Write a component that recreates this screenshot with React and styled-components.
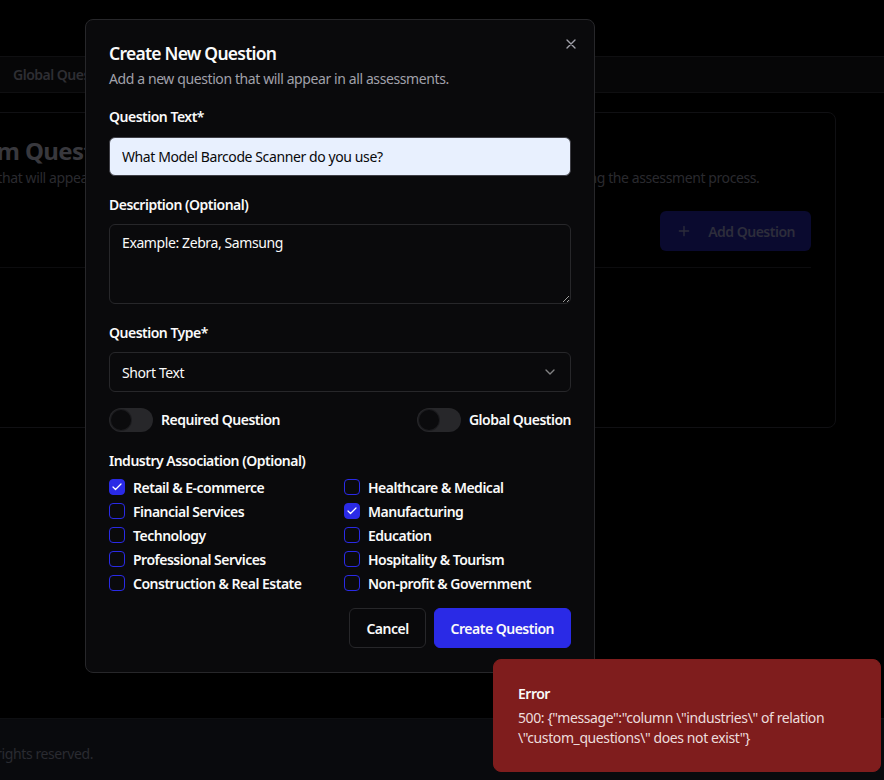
import React from "react";
import styled, { createGlobalStyle } from "styled-components";

const FONT = `"Noto Sans", "Open Sans", sans-serif`;

const GlobalStyle = createGlobalStyle`
  html, body { margin: 0; padding: 0; background: #000; }
  body { font-family: ${FONT}; overflow: hidden; letter-spacing: -0.4px; }
  * { box-sizing: border-box; }
`;

/* ---------- background page (dimmed by the dialog overlay) ---------- */
const Page = styled.div`
  width: 884px;
  height: 780px;
  display: flex;
  flex-direction: column;
  overflow: hidden;
  background: #000;
`;
const TopBar = styled.div`
  height: 57px;
  border-bottom: 1px solid #0f0f11;
`;
const TabStrip = styled.div`
  height: 36px;
  display: flex;
  align-items: center;
  padding-left: 13px;
  background: #060607;
  border-bottom: 1px solid #0f0f11;
`;
const TabLabel = styled.span`
  font-size: 14px;
  font-weight: 600;
  letter-spacing: -0.5px;
  color: #2e2e33;
`;
const Main = styled.main`
  flex: 1;
  padding: 19px 48px 0 0;
`;
const Card = styled.section`
  margin-left: -94px;
  height: 316px;
  border: 1px solid #101013;
  border-radius: 8px;
  padding: 23px 24px 0 24px;
  display: flex;
  flex-direction: column;
`;
const CardTitle = styled.h2`
  margin: 0;
  font-size: 24px;
  line-height: 30px;
  font-weight: 700;
  letter-spacing: -0.6px;
  color: #38383d;
`;
const CardSub = styled.p`
  margin: 2px 0 0;
  font-size: 14px;
  line-height: 20px;
  white-space: nowrap;
  color: #2a2a2f;
`;
const CardActions = styled.div`
  display: flex;
  justify-content: flex-end;
  margin-top: 23px;
  padding-bottom: 16px;
  border-bottom: 1px solid #0c0c0e;
`;
const GhostPrimary = styled.div`
  height: 40px;
  display: flex;
  align-items: center;
  gap: 16px;
  padding: 0 16px;
  border-radius: 6px;
  background: #0a0a2f;
  color: #2d2d3b;
  font-size: 14px;
  font-weight: 600;
  letter-spacing: -0.5px;
`;
const Footer = styled.footer`
  height: 62px;
  background: #090a0d;
  border-top: 1px solid #0e0f12;
  display: flex;
  align-items: center;
`;
const FooterText = styled.div`
  width: 93px;
  display: flex;
  justify-content: flex-end;
  white-space: nowrap;
  font-size: 14px;
  color: #2a2b31;
  padding-top: 8px;
`;

/* ---------- dialog ---------- */
const Dialog = styled.div`
  position: fixed;
  left: 85px;
  top: 19px;
  width: 510px;
  background: #0a0a0c;
  border: 1px solid #27272a;
  border-radius: 8px;
  padding: 23px 23px 24px;
  display: flex;
  flex-direction: column;
`;
const CloseBtn = styled.button`
  position: absolute;
  right: 15px;
  top: 16px;
  width: 16px;
  height: 16px;
  padding: 0;
  border: 0;
  background: none;
  color: #a1a1aa;
  display: flex;
  cursor: pointer;
`;
const Title = styled.h2`
  margin: 0;
  font-size: 17.5px;
  line-height: 20px;
  font-weight: 600;
  color: #fafafa;
  letter-spacing: -0.75px;
`;
const Subtitle = styled.p`
  margin: 6px 0 0;
  font-size: 14px;
  line-height: 20px;
  color: #a1a1aa;
`;
const Field = styled.div`
  margin-top: ${(p) => p.$mt}px;
  display: flex;
  flex-direction: column;
`;
const Label = styled.label`
  font-size: 14px;
  line-height: 20px;
  font-weight: 600;
  letter-spacing: -0.5px;
  color: #fafafa;
  margin-bottom: ${(p) => p.$mb ?? 9}px;
`;
const TextInput = styled.input`
  height: 39px;
  width: 100%;
  border-radius: 6px;
  border: 1px solid #3f3f46;
  background: #e8f0fe;
  color: #09090b;
  padding: 0 12px;
  font-family: ${FONT};
  font-size: 14px;
  letter-spacing: -0.4px;
  outline: none;
`;
const TextArea = styled.textarea`
  height: 80px;
  width: 100%;
  border-radius: 6px;
  border: 1px solid #27272a;
  background: #0a0a0c;
  color: #fafafa;
  padding: 8px 12px;
  font-family: ${FONT};
  font-size: 14px;
  letter-spacing: -0.4px;
  line-height: 20px;
  resize: vertical;
  outline: none;
  display: block;
`;
const SelectBox = styled.div`
  height: 40px;
  border-radius: 6px;
  border: 1px solid #27272a;
  padding: 0 12px;
  display: flex;
  align-items: center;
  justify-content: space-between;
  font-size: 14px;
  color: #fafafa;
`;
const Chevron = styled.svg`
  width: 16px;
  height: 16px;
  color: #fafafa;
  opacity: 0.5;
`;
const ToggleRow = styled.div`
  margin-top: 16px;
  display: flex;
  justify-content: space-between;
  align-items: center;
`;
const ToggleItem = styled.label`
  display: flex;
  align-items: center;
  gap: 8px;
  font-size: 14px;
  font-weight: 600;
  letter-spacing: -0.5px;
  color: #fafafa;
  line-height: 24px;
`;
const Track = styled.span`
  width: 44px;
  height: 24px;
  border-radius: 12px;
  background: #27272a;
  padding: 2px;
  display: flex;
  align-items: center;
`;
const Thumb = styled.span`
  width: 20px;
  height: 20px;
  border-radius: 50%;
  background: #0b0b0d;
  box-shadow: 0 0 0 1px #1c1c1f;
`;
const CheckGrid = styled.div`
  display: grid;
  grid-template-columns: 1fr 1fr;
  column-gap: 8px;
  row-gap: 4px;
`;
const CheckItem = styled.label`
  display: flex;
  align-items: center;
  gap: 8px;
  height: 20px;
  font-size: 14px;
  font-weight: 600;
  letter-spacing: -0.5px;
  color: #fafafa;
`;
const Box = styled.span`
  width: 16px;
  height: 16px;
  border-radius: 4px;
  border: 1px solid #2a2ae6;
  background: ${(p) => (p.$checked ? "#2a2ae6" : "transparent")};
  display: flex;
  align-items: center;
  justify-content: center;
  flex-shrink: 0;
`;
const Actions = styled.div`
  margin-top: 15px;
  display: flex;
  justify-content: flex-end;
  gap: 8px;
`;
const Button = styled.button`
  height: 40px;
  padding: 0 16px;
  border-radius: 6px;
  font-family: ${FONT};
  font-size: 14px;
  font-weight: 600;
  letter-spacing: -0.5px;
  cursor: pointer;
  color: #fafafa;
  border: 1px solid ${(p) => (p.$primary ? "#2a2ae6" : "#27272a")};
  background: ${(p) => (p.$primary ? "#2a2ae6" : "#09090b")};
`;

/* ---------- toast ---------- */
const Toast = styled.div`
  position: fixed;
  right: 3px;
  bottom: 8px;
  width: 388px;
  padding: 24px 24px 23px 24px;
  border-radius: 8px;
  background: #7f1d1d;
  border: 1px solid #7f1d1d;
  color: #fafafa;
`;
const ToastTitle = styled.div`
  font-size: 14px;
  line-height: 20px;
  font-weight: 600;
  letter-spacing: -0.5px;
`;
const ToastMsg = styled.div`
  margin-top: 4px;
  font-size: 14px;
  line-height: 20px;
  color: #ecdcdc;
`;

const industries = [
  ["Retail & E-commerce", true],
  ["Healthcare & Medical", false],
  ["Financial Services", false],
  ["Manufacturing", true],
  ["Technology", false],
  ["Education", false],
  ["Professional Services", false],
  ["Hospitality & Tourism", false],
  ["Construction & Real Estate", false],
  ["Non-profit & Government", false],
];

const Toggle = ({ label }) => (
  <ToggleItem>
    <Track>
      <Thumb />
    </Track>
    {label}
  </ToggleItem>
);

export default function App() {
  return (
    <>
      <GlobalStyle />
      <Page>
        <TopBar />
        <TabStrip>
          <TabLabel>Global Questions</TabLabel>
        </TabStrip>
        <Main>
          <Card>
            <CardTitle>Custom Questions</CardTitle>
            <CardSub>
              Questions that will appear in all assessments. Your clients will be prompted to
              answer these questions during the assessment process.
            </CardSub>
            <CardActions>
              <GhostPrimary>
                <svg width="16" height="16" viewBox="0 0 24 24" fill="none" stroke="currentColor" strokeWidth="2" strokeLinecap="round">
                  <path d="M5 12h14M12 5v14" />
                </svg>
                Add Question
              </GhostPrimary>
            </CardActions>
          </Card>
        </Main>
        <Footer>
          <FooterText>© 2025 Assessment Platform. All rights reserved.</FooterText>
        </Footer>
      </Page>

      <Dialog role="dialog">
        <CloseBtn aria-label="Close">
          <svg width="16" height="16" viewBox="0 0 24 24" fill="none" stroke="currentColor" strokeWidth="2" strokeLinecap="round" strokeLinejoin="round">
            <path d="M18 6 6 18M6 6l12 12" />
          </svg>
        </CloseBtn>
        <Title>Create New Question</Title>
        <Subtitle>Add a new question that will appear in all assessments.</Subtitle>

        <Field $mt={18}>
          <Label $mb={10}>Question Text*</Label>
          <TextInput defaultValue="What Model Barcode Scanner do you use?" />
        </Field>

        <Field $mt={19}>
          <Label>Description (Optional)</Label>
          <TextArea defaultValue="Example: Zebra, Samsung" />
        </Field>

        <Field $mt={19}>
          <Label>Question Type*</Label>
          <SelectBox>
            <span>Short Text</span>
            <Chevron viewBox="0 0 24 24" fill="none" stroke="currentColor" strokeWidth="2" strokeLinecap="round" strokeLinejoin="round">
              <path d="m6 9 6 6 6-6" />
            </Chevron>
          </SelectBox>
        </Field>

        <ToggleRow>
          <Toggle label="Required Question" />
          <Toggle label="Global Question" />
        </ToggleRow>

        <Field $mt={19}>
          <Label $mb={6}>Industry Association (Optional)</Label>
          <CheckGrid>
            {industries.map(([name, checked]) => (
              <CheckItem key={name}>
                <Box $checked={checked}>
                  {checked && (
                    <svg width="12" height="12" viewBox="0 0 24 24" fill="none" stroke="#fff" strokeWidth="2.5" strokeLinecap="round" strokeLinejoin="round">
                      <path d="M20 6 9 17l-5-5" />
                    </svg>
                  )}
                </Box>
                {name}
              </CheckItem>
            ))}
          </CheckGrid>
        </Field>

        <Actions>
          <Button>Cancel</Button>
          <Button $primary>Create Question</Button>
        </Actions>
      </Dialog>

      <Toast role="alert">
        <ToastTitle>Error</ToastTitle>
        <ToastMsg>
          500: {'{"message":"column \\"industries\\" of relation \\"custom_questions\\" does not exist"}'}
        </ToastMsg>
      </Toast>
    </>
  );
}
